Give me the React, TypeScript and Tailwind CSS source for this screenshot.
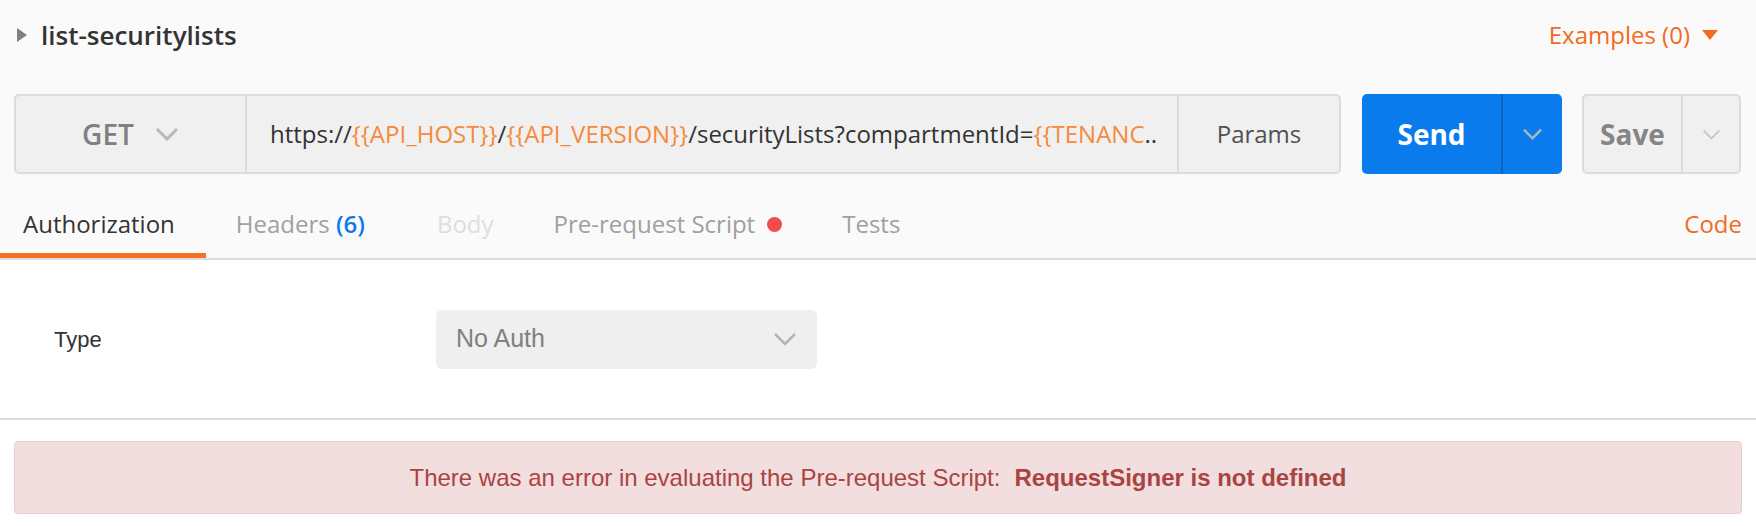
function Chevron({ className, stroke, width = 3 }: { className: string; stroke: string; width?: number }) {
  return (
    <svg className={className} viewBox="0 0 24 14" fill="none">
      <polyline points="2,2 12,12 22,2" stroke={stroke} strokeWidth={width} />
    </svg>
  );
}

export default function App() {
  return (
    <div className="h-[526px] w-[1756px] overflow-hidden bg-white font-['Open_Sans',sans-serif]">
      {/* request header */}
      <div className="bg-[#fafafa]">
        <div className="flex h-[70px] items-center justify-between pl-[17px] pr-[38px]">
          <div className="flex items-center gap-[14px]">
            <svg className="h-[14px] w-[10px]" viewBox="0 0 10 14">
              <polygon points="0,0 10,7 0,14" fill="#808080" />
            </svg>
            <span className="text-[26px] font-semibold leading-none text-[#333]">list-securitylists</span>
          </div>
          <div className="flex items-center gap-[12px] text-[24px] text-[#f26b21]">
            <span>Examples (0)</span>
            <svg className="h-[10px] w-[16px]" viewBox="0 0 16 10">
              <polygon points="0,0 16,0 8,10" fill="#f26b21" />
            </svg>
          </div>
        </div>

        <div className="mt-[24px] flex px-[14px]">
          <div className="flex h-[80px] w-[1327px] rounded-[5px] border-2 border-[#dcdcdc] bg-[#f0f0f0]">
            <div className="flex w-[231px] items-center justify-center gap-[21px] border-r-2 border-[#dcdcdc]">
              <span className="text-[28px] font-semibold text-[#808080]">GET</span>
              <Chevron className="h-[14px] w-[24px]" stroke="#b8b8b8" />
            </div>
            <div className="flex flex-1 items-center pl-[23px] text-[24px] text-[#333]">
              <span>
                https://<span className="text-[#f58a3c]">{'{{API_HOST}}'}</span>/
                <span className="text-[#f58a3c]">{'{{API_VERSION}}'}</span>/securityLists?compartmentId=
                <span className="text-[#f58a3c]">{'{{TENANC'}</span>..
              </span>
            </div>
            <div className="flex w-[162px] items-center justify-center border-l-2 border-[#dcdcdc] text-[24px] text-[#505050]">
              Params
            </div>
          </div>

          <div className="ml-[21px] flex h-[80px] w-[200px] overflow-hidden rounded-[5px] bg-[#097bed]">
            <div className="flex w-[139px] items-center justify-center text-[28px] font-bold text-white">Send</div>
            <div className="w-[2px] bg-[#0b63c1]" />
            <div className="flex flex-1 items-center justify-center">
              <Chevron className="h-[12px] w-[21px]" stroke="#a9b4c2" />
            </div>
          </div>

          <div className="ml-[20px] flex h-[80px] w-[159px] rounded-[5px] border-2 border-[#dcdcdc] bg-[#f0f0f0]">
            <div className="flex w-[97px] items-center justify-center text-[28px] font-bold text-[#858585]">Save</div>
            <div className="flex flex-1 items-center justify-center border-l-2 border-[#dcdcdc]">
              <Chevron className="h-[11px] w-[19px]" stroke="#c4c4c4" width={2} />
            </div>
          </div>
        </div>

        <div className="flex h-[86px] items-stretch justify-between border-b-2 border-[#dcdcdc] text-[24px]">
          <div className="flex">
            <div className="flex items-center border-b-[5px] border-[#f47023] pl-[23px] pr-[31px] pt-[21px] text-[#333]">
              Authorization
            </div>
            <div className="flex items-center border-b-[5px] border-transparent pl-[30px] pr-[42px] pt-[21px] text-[#a0a0a0]">
              Headers&nbsp;<span className="font-semibold text-[#097bed]">(6)</span>
            </div>
            <div className="flex items-center border-b-[5px] border-transparent px-[30px] pt-[21px] text-[#dedede]">Body</div>
            <div className="flex items-center gap-[12px] border-b-[5px] border-transparent pl-[30px] pr-[30px] pt-[21px] text-[#a0a0a0]">
              Pre-request Script
              <span className="h-[15px] w-[15px] rounded-full bg-[#f04c4c]" />
            </div>
            <div className="flex items-center border-b-[5px] border-transparent px-[30px] pt-[21px] text-[#a0a0a0]">Tests</div>
          </div>
          <div className="flex items-center border-b-[5px] border-transparent pr-[14px] pt-[21px] text-[#f26b21]">Code</div>
        </div>
      </div>

      {/* auth body */}
      <div className="flex h-[160px] items-center border-b-2 border-[#dcdcdc] pl-[54px] font-['Liberation_Sans',sans-serif]">
        <div className="w-[382px] text-[22px] text-[#333]">Type</div>
        <div className="flex h-[59px] w-[381px] items-center justify-between rounded-[6px] bg-[#efefef] pl-[20px] pr-[19px]">
          <span className="text-[25px] text-[#808080]">No Auth</span>
          <Chevron className="h-[14px] w-[26px]" stroke="#b4b4b4" width={2.5} />
        </div>
      </div>

      {/* error */}
      <div className="px-[14px] pt-[21px]">
        <div className="flex h-[73px] items-center justify-center rounded-[4px] border border-[#ebccd1] bg-[#f2dede] font-['Liberation_Sans',sans-serif] text-[24px] text-[#a94442]">
          There was an error in evaluating the Pre-request Script:
          <span className="ml-[14px] font-bold">RequestSigner is not defined</span>
        </div>
      </div>
    </div>
  );
}
